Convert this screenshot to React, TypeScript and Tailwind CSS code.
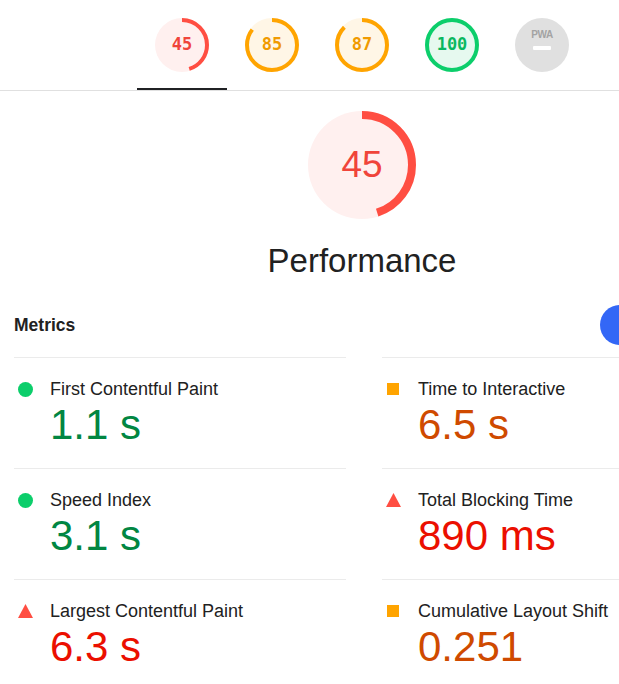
import React from "react";

type Tone = "fail" | "average" | "pass";

const TONE = {
  fail: { ring: "#ff4e42", fill: "#fff0ef", text: "#f0443a" },
  average: { ring: "#ffa400", fill: "#fff6e6", text: "#f09a00" },
  pass: { ring: "#0cce6b", fill: "#e6f9ef", text: "#0bb85f" },
};

const TABS: { score: number; tone: Tone }[] = [
  { score: 45, tone: "fail" },
  { score: 85, tone: "average" },
  { score: 87, tone: "average" },
  { score: 100, tone: "pass" },
];

const METRICS = [
  { label: "First Contentful Paint", value: "1.1 s", icon: "circle", color: "text-[#018642]" },
  { label: "Time to Interactive", value: "6.5 s", icon: "square", color: "text-[#cf4a00]" },
  { label: "Speed Index", value: "3.1 s", icon: "circle", color: "text-[#018642]" },
  { label: "Total Blocking Time", value: "890 ms", icon: "triangle", color: "text-[#eb0f00]" },
  { label: "Largest Contentful Paint", value: "6.3 s", icon: "triangle", color: "text-[#eb0f00]" },
  { label: "Cumulative Layout Shift", value: "0.251", icon: "square", color: "text-[#cf4a00]" },
];

function Ring({ size, stroke, score, tone }: { size: number; stroke: number; score: number; tone: Tone }) {
  const c = TONE[tone];
  const r = size / 2 - stroke / 2;
  const len = 2 * Math.PI * r;
  return (
    <svg width={size} height={size} viewBox={`0 0 ${size} ${size}`} className="-rotate-90">
      <circle cx={size / 2} cy={size / 2} r={size / 2} fill={c.fill} />
      <circle
        cx={size / 2}
        cy={size / 2}
        r={r}
        fill="none"
        stroke={c.ring}
        strokeWidth={stroke}
        strokeDasharray={`${(len * score) / 100} ${len}`}
      />
    </svg>
  );
}

function MetricIcon({ kind }: { kind: string }) {
  if (kind === "circle") return <span className="w-[15px] h-[15px] rounded-full bg-[#0cce6b]" />;
  if (kind === "square") return <span className="w-[12px] h-[12px] bg-[#ffa400]" />;
  return (
    <svg width="15" height="14" viewBox="0 0 15 14">
      <polygon points="7.5,0 15,14 0,14" fill="#ff4e42" />
    </svg>
  );
}

export default function App() {
  return (
    <div className="w-full h-[684px] overflow-hidden bg-white text-[#212121] font-['Liberation_Sans',Arial,sans-serif]">
      <div className="w-[724px]">
        {/* Category tabs */}
        <div className="flex justify-center border-b border-[#e0e0e0]">
          {TABS.map((t, i) => (
            <div
              key={t.score}
              className={`w-[90px] h-[90px] flex justify-center pt-[18px] ${i === 0 ? "border-b-2 border-[#202124] -mb-px" : ""}`}
            >
              <div className="relative w-[54px] h-[54px]">
                <Ring size={54} stroke={4} score={t.score} tone={t.tone} />
                <span
                  className="absolute inset-0 flex items-center justify-center text-[17px] font-bold font-['DejaVu_Sans_Mono',monospace]"
                  style={{ color: TONE[t.tone].text }}
                >
                  {t.score}
                </span>
              </div>
            </div>
          ))}
          <div className="w-[90px] h-[90px] flex justify-center pt-[18px]">
            <div className="w-[54px] h-[54px] rounded-full bg-[#e0e0e0] flex flex-col items-center pt-[11px]">
              <span className="text-[10px] leading-[12px] font-bold text-[#a3a3a3] tracking-[-0.5px]">PWA</span>
              <span className="mt-[5px] w-[18px] h-[4px] rounded-[1px] bg-white" />
            </div>
          </div>
        </div>

        {/* Performance gauge */}
        <div className="flex flex-col items-center pt-[20px]">
          <div className="relative w-[108px] h-[108px]">
            <Ring size={108} stroke={8} score={45} tone="fail" />
            <span className="absolute inset-0 flex items-center justify-center text-[37px] text-[#f0443a]">45</span>
          </div>
          <h1 className="mt-[22px] text-[33px] leading-[40px] text-[#212121]">Performance</h1>
        </div>

        {/* Metrics */}
        <div className="px-[14px] mt-[24px]">
          <div className="flex items-center pb-[12px]">
            <h2 className="text-[17.5px] font-bold text-[#212121]">Metrics</h2>
            <div className="ml-auto mr-[70px] w-10 h-10 rounded-full bg-[#3367f6] flex items-center justify-center">
              <span className="w-[3px] h-[8px] bg-white ml-[34px]" />
            </div>
          </div>
          <div className="grid grid-cols-[332px_332px] gap-x-[36px]">
            {METRICS.map((m) => (
              <div key={m.label} className="border-t border-[#ebebeb] pt-[19px] pb-[19px] h-[111px]">
                <div className="flex items-center h-[24px]">
                  <div className="w-[22px] flex justify-center">
                    <MetricIcon kind={m.icon} />
                  </div>
                  <span className="ml-[14px] text-[18px] leading-[24px] text-[#212121]">{m.label}</span>
                </div>
                <div className={`pl-[36px] text-[42px] leading-[48px] ${m.color}`}>{m.value}</div>
              </div>
            ))}
          </div>
        </div>
      </div>
    </div>
  );
}
